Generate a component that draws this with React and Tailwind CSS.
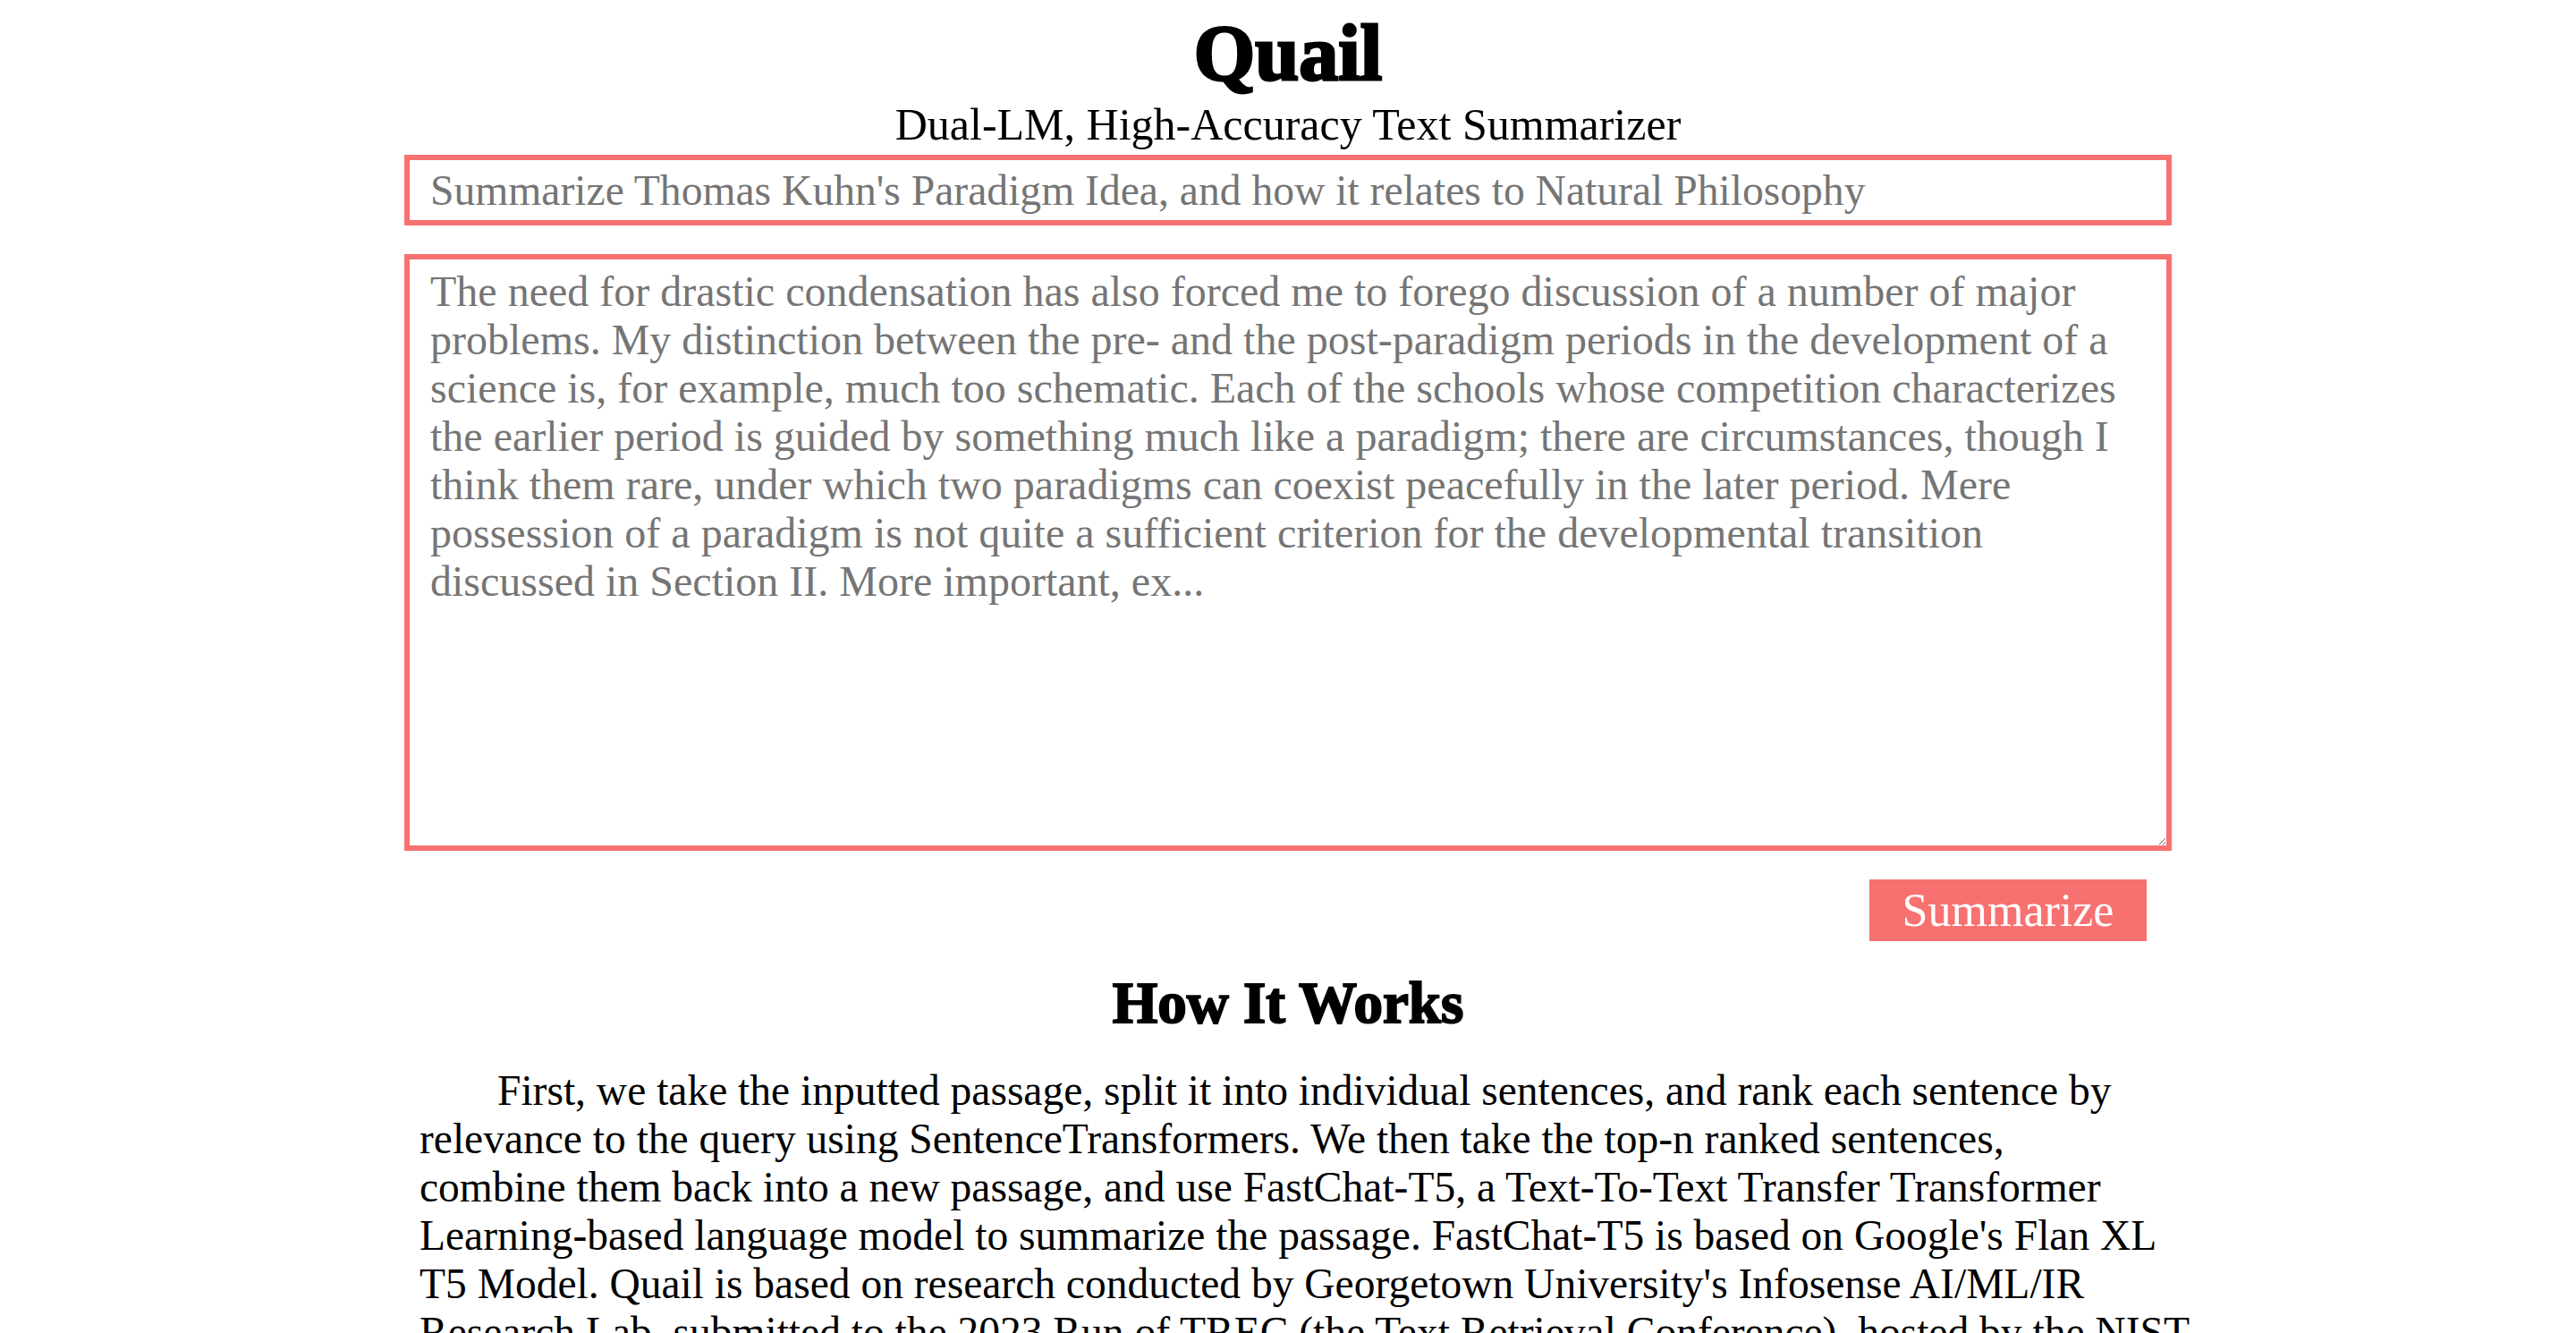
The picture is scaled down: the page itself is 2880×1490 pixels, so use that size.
export default function App() {
  return (
    <div className="min-h-screen bg-white text-black font-['Liberation_Serif',serif]">
      <div className="mx-auto w-[1976px]">
        {/* Header */}
        <h1 className="pt-[16px] text-center text-[88px] font-black leading-none [-webkit-text-stroke:3px_black]">
          Quail
        </h1>
        <p className="mt-[8px] text-center text-[50px] leading-[54px]">
          Dual-LM, High-Accuracy Text Summarizer
        </p>

        {/* Query */}
        <input
          type="text"
          className="mt-[7px] block h-[79px] w-full border-[6px] border-[#f87171] px-[23px] text-[47.6px] outline-none placeholder:text-[#757575]"
          placeholder="Summarize Thomas Kuhn's Paradigm Idea, and how it relates to Natural Philosophy"
        />

        {/* Passage */}
        <textarea
          className="mt-[32px] block h-[667px] w-full border-[6px] border-[#f87171] px-[23px] pt-[9px] text-[48px] leading-[54px] outline-none placeholder:text-[#757575]"
          placeholder="The need for drastic condensation has also forced me to forego discussion of a number of major problems. My distinction between the pre- and the post-paradigm periods in the development of a science is, for example, much too schematic. Each of the schools whose competition characterizes the earlier period is guided by something much like a paradigm; there are circumstances, though I think them rare, under which two paradigms can coexist peacefully in the later period. Mere possession of a paradigm is not quite a sufficient criterion for the developmental transition discussed in Section II. More important, ex..."
        />

        <div className="mt-[32px] flex justify-end pr-[28px]">
          <button className="h-[69px] w-[310px] bg-[#f87171] text-[52px] leading-none text-white">
            Summarize
          </button>
        </div>

        {/* How it works */}
        <h2 className="mt-[37px] text-center text-[65px] font-black leading-none [-webkit-text-stroke:2px_black]">
          How It Works
        </h2>
        <p className="mt-[38px] whitespace-nowrap pl-[17px] indent-[87px] text-[47.5px] leading-[54px]">
          First, we take the inputted passage, split it into individual sentences, and rank each sentence by
          <br />
          relevance to the query using SentenceTransformers. We then take the top-n ranked sentences,
          <br />
          combine them back into a new passage, and use FastChat-T5, a Text-To-Text Transfer Transformer
          <br />
          Learning-based language model to summarize the passage. FastChat-T5 is based on Google's Flan XL
          <br />
          T5 Model. Quail is based on research conducted by Georgetown University's Infosense AI/ML/IR
          <br />
          Research Lab, submitted to the 2023 Run of TREC (the Text Retrieval Conference), hosted by the NIST.
        </p>
      </div>
    </div>
  );
}
